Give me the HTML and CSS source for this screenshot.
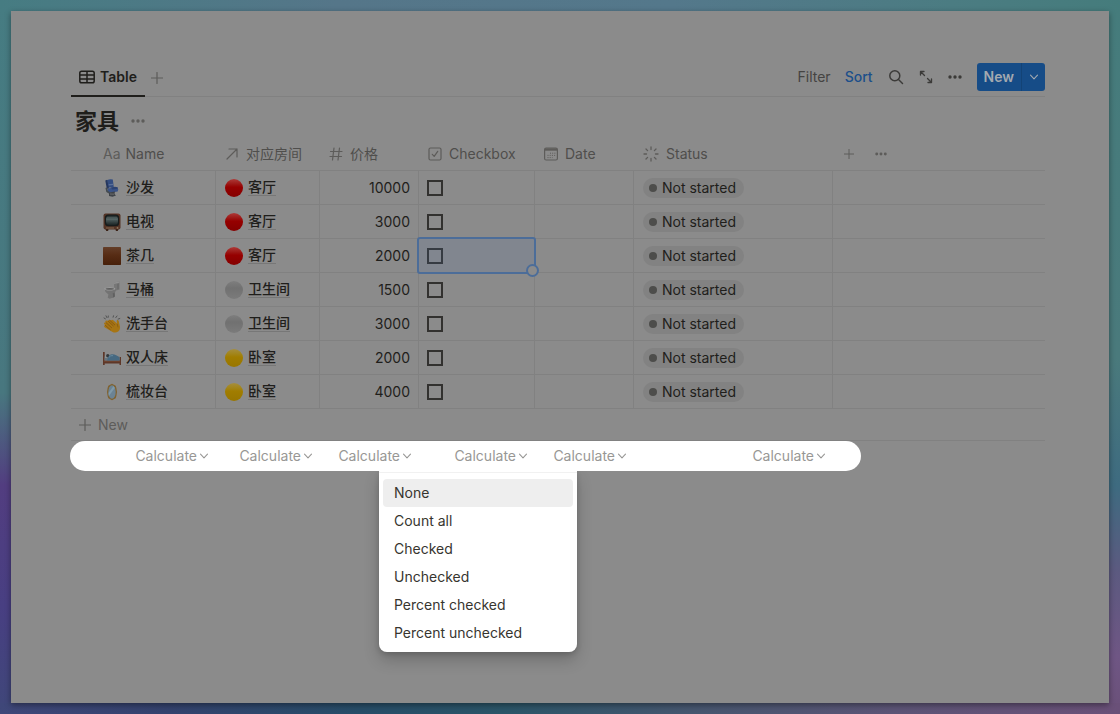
FILE: index.html
```html
<!DOCTYPE html>
<html lang="zh-CN">
<head>
<meta charset="utf-8">
<meta name="viewport" content="width=device-width, initial-scale=1">
<title>家具</title>
<link rel="stylesheet" href="styles.css">
</head>
<body>
<svg class="defs" aria-hidden="true">
  <defs>
    <linearGradient id="g-red" x1="0" y1="0" x2="0" y2="1"><stop offset="0" stop-color="#ae3a38"/><stop offset=".28" stop-color="#9c1715"/><stop offset=".45" stop-color="#960000"/><stop offset="1" stop-color="#840000"/></linearGradient>
    <linearGradient id="g-white" x1="0" y1="0" x2="0" y2="1"><stop offset="0" stop-color="#7e7e7e"/><stop offset=".4" stop-color="#717171"/><stop offset="1" stop-color="#7b7b7b"/></linearGradient>
    <linearGradient id="g-yellow" x1="0" y1="0" x2="0" y2="1"><stop offset="0" stop-color="#a58e3e"/><stop offset=".3" stop-color="#a28416"/><stop offset=".45" stop-color="#a17d00"/><stop offset="1" stop-color="#987600"/></linearGradient>
    <linearGradient id="g-brown" x1="0" y1="0" x2="0" y2="1"><stop offset="0" stop-color="#643e28"/><stop offset=".45" stop-color="#572c14"/><stop offset="1" stop-color="#47200a"/></linearGradient>
    <linearGradient id="g-tv" x1="0" y1="0" x2="0" y2="1"><stop offset="0" stop-color="#1c2424"/><stop offset=".35" stop-color="#526262"/><stop offset="1" stop-color="#1c2525"/></linearGradient>
    <symbol id="chevron" viewBox="0 0 10 10"><path d="M1.500 3.200 5 6.800l3.500-3.600" fill="none" stroke="currentColor" stroke-width="1.100" stroke-linecap="round" stroke-linejoin="round"/></symbol>
    <symbol id="plus" viewBox="0 0 12 12"><path d="M6 .5v11M.5 6h11" fill="none" stroke="currentColor" stroke-width="1.200" stroke-linecap="round"/></symbol>
    <symbol id="dots" viewBox="0 0 14 14"><g fill="currentColor"><circle cx="2" cy="7" r="1.700"/><circle cx="7" cy="7" r="1.700"/><circle cx="12" cy="7" r="1.700"/></g></symbol>
    <symbol id="red" viewBox="0 0 18 18"><circle cx="9" cy="9" r="9" fill="url(#g-red)"/></symbol>
    <symbol id="white" viewBox="0 0 18 18"><circle cx="9" cy="9" r="9" fill="url(#g-white)"/></symbol>
    <symbol id="yellow" viewBox="0 0 18 18"><circle cx="9" cy="9" r="9" fill="url(#g-yellow)"/></symbol>
    <symbol id="seat" viewBox="0 0 18 18">
      <path d="M4 1.200Q7-.2 9.800.6l1 8H5.200Z" fill="#344d80"/><path d="M2.300 1.500 4.200.700 6 9.500l-2.200.2Z" fill="#25375f"/>
      <path d="m5.500 5.200 4.500-.4.200 1.200-4.500.4Z" fill="#5c7199"/>
      <path d="M5 9.500 13.500 8l1.700 2.500-.5 2-8.200 1.300L4.500 12Z" fill="#3a5388"/><path d="m8 8.500 4-.8 3 .8-.2 1.200-5.600.8Z" fill="#2c4272"/>
      <path d="m4.200 8.200-1.700.8.800 4 3 1.700.2-2-1.700-1Z" fill="#444b52"/>
      <path d="m6 13.500 6-1-.5 2.500 1.500 1.500-3.500 1.200L6 17Z" fill="#3f4348"/><path d="m7 15 4 .2" stroke="#777" stroke-width=".8"/>
    </symbol>
    <symbol id="tv" viewBox="0 0 18 18">
      <rect x=".5" y=".5" width="17" height="16" rx="2" fill="#543426"/><path d="M2.500 16h3l-.4 2H3.200Zm10 0h3l-.7 2h-1.900Z" fill="#3c2318"/>
      <rect x="1.800" y="1.500" width="14.400" height="11.800" rx="3.500" fill="#171c1c"/><rect x="3" y="2.500" width="12" height="9.500" rx="3.500" fill="url(#g-tv)"/>
      <path d="M4 4.500h10M3.500 6.500h11" stroke="#6d7b7b" stroke-width=".5" opacity=".5"/>
      <path d="M3 15h8" stroke="#81674f" stroke-width="1"/><circle cx="14.500" cy="14.900" r=".9" fill="#91785e"/>
    </symbol>
    <symbol id="square" viewBox="0 0 18 18"><rect width="18" height="18" rx=".7" fill="url(#g-brown)"/></symbol>
    <symbol id="toilet" viewBox="0 0 18 18">
      <path d="M11 1.500 16.500.500v8.200l-4 .8L11 8Z" fill="#777"/><path d="m11 1.500 5.500-1v1.300L11 3Z" fill="#919191"/>
      <path d="m14 3 2-.4V8l-2 .4Z" fill="#6d6d6d"/><path d="M1.500 7.200Q6 5 12.500 7l1 1.800-1.800 3-2.200 1.700.2 3.200-3.200 1-1.800-1 .7-3.200-3-2.800Z" fill="#737373"/>
      <ellipse cx="6.700" cy="7.700" rx="5.700" ry="1.700" fill="#9a9a9a"/><ellipse cx="6.800" cy="7.900" rx="4.200" ry=".8" fill="#5d5d5d"/>
      <path d="m9.700 12.500 2-1 .3 4-2.300 1.500Z" fill="#606060"/>
    </symbol>
    <symbol id="clap" viewBox="0 0 18 18">
      <path d="M8.300 5.200q1-1 2 .1l3.700 3.300-.3-2.500q.1-1.200 1.300-1 .9.300 1.200 3.100l.8 3.600q.4 2.800-1.800 4.700-3 2.100-6 .2L1.600 12.200q-1-1.100-.1-1.800l.8-.1-1.100-1.200q-.7-1.400.8-1.700l1 .2-.5-.7q-.5-1.400 1.100-1.500l1.600.7q-.1-1.300 1.200-1.200Z" fill="#a77514"/>
      <path d="m5.200 6.100 5 4.700M3 7.600l5.700 5.200M2.300 10.300l5 4.400M6.700 5.300l5 4.500" fill="none" stroke="#7d4f10" stroke-width=".7" stroke-linecap="round"/>
      <path d="m14.200 8.800.8 3.500" stroke="#815615" stroke-width=".7"/>
      <path d="m1 3 1.400.8M3 .8l.8 1.700M5.300 1l-.2 1.400M10.500.8l-.4 1.400M14 1l-1.200 1.600M16.800 3.500l-1.700.6" stroke="#515252" stroke-width="1" stroke-linecap="round"/>
    </symbol>
    <symbol id="bed" viewBox="0 0 18 18">
      <path d="M0 3h1.700v13H0ZM16.500 8H18v8h-1.500ZM1 11.500h16v3H1Z" fill="#5e3728"/><path d="M1.500 7.500h15v4.200h-15Z" fill="#66747d"/>
      <path d="M2 6.500Q4.500 4.500 6 6.500L7 9H2Z" fill="#8d9294"/><circle cx="4.800" cy="6.800" r="1.700" fill="#34393d"/>
      <path d="M5 8.800q1-3.500 4-3.600 4.300-.2 7.500 3.500v3H4Z" fill="#466981"/><path d="M6 8.300q1.500-2.200 4-1.700" stroke="#66899e" fill="none"/>
      <path d="M1 12.200h16" stroke="#7d4e38" stroke-width=".7"/>
    </symbol>
    <symbol id="mirror" viewBox="0 0 18 18">
      <path d="m9 .700 1.400.800 2.300 1.300.7 2.200.6 4-.6 4-.7 2.200-2.300 1.300-1.400.8-1.400-.8-2.300-1.300-.7-2.200L4 9l.6-4 .7-2.200 2.300-1.300Z" fill="#80622f"/>
      <ellipse cx="9" cy="9" rx="3.700" ry="6.800" fill="#6b8394"/><path d="m5.500 10 5-7 1.300 2-6 8Z" fill="#7f99a8"/>
    </symbol>
  </defs>
</svg>

<main class="window">
  <header class="toolbar">
    <nav class="tabs" aria-label="Views">
      <button class="tab"><svg class="i16" viewBox="0 0 16 16" fill="none" stroke="currentColor" stroke-width="1.500"><rect x=".8" y="2.300" width="14.400" height="11.400" rx="1.800"/><path d="M1 6.100h14M1 9.900h14M8 2.500v11"/></svg>Table</button>
      <button class="icon-btn faint" aria-label="Add view"><svg class="i12"><use href="#plus"/></svg></button>
    </nav>
    <div class="actions">
      <button class="text-btn">Filter</button>
      <button class="text-btn sort">Sort</button>
      <button class="icon-btn" aria-label="Search"><svg class="i16" viewBox="0 0 16 16" fill="none" stroke="currentColor" stroke-width="1.500" stroke-linecap="round"><circle cx="6.800" cy="6.800" r="5"/><path d="m10.500 10.500 4 4"/></svg></button>
      <button class="icon-btn" aria-label="Expand"><svg class="i14" viewBox="0 0 14 14" fill="none" stroke="currentColor" stroke-width="1.300" stroke-linecap="round" stroke-linejoin="round"><path d="M1.500 5V1.500H5M1.500 1.500l4 4M9 12.500h3.500V9M12.500 12.500l-4-4"/></svg></button>
      <button class="icon-btn" aria-label="More"><svg class="i14"><use href="#dots"/></svg></button>
      <div class="split"><button class="new">New</button><button class="new-more" aria-label="Templates"><svg class="i10"><use href="#chevron"/></svg></button></div>
    </div>
  </header>

  <div class="title"><h1>家具</h1><button class="icon-btn faint" aria-label="Database options"><svg class="i14"><use href="#dots"/></svg></button></div>

  <table class="grid">
    <colgroup><col class="c-name"><col class="c-room"><col class="c-price"><col class="c-check"><col class="c-date"><col class="c-status"><col></colgroup>
    <thead>
      <tr>
        <th class="first"><span class="head"><span class="aa">Aa</span>Name</span></th>
        <th><span class="head"><svg class="i14" viewBox="0 0 14 14" fill="none" stroke="currentColor" stroke-width="1.200" stroke-linecap="round" stroke-linejoin="round"><path d="M2 12 12 2M4 2h8v8"/></svg>对应房间</span></th>
        <th><span class="head"><svg class="i14" viewBox="0 0 14 14" fill="none" stroke="currentColor" stroke-width="1.200" stroke-linecap="round"><path d="M5 1 3.500 13M10.500 1 9 13M1.500 4.500h11.500M1 9.500h11.500"/></svg>价格</span></th>
        <th><span class="head"><svg class="i14" viewBox="0 0 14 14" fill="none" stroke="currentColor" stroke-width="1.200" stroke-linecap="round" stroke-linejoin="round"><rect x="1" y="1" width="12" height="12" rx="1.500"/><path d="m4.300 7.300 1.900 2 3.500-5"/></svg>Checkbox</span></th>
        <th><span class="head"><svg class="i14" viewBox="0 0 14 14" fill="none" stroke="currentColor" stroke-width="1.200"><rect x=".6" y="1" width="12.800" height="12" rx="1.500"/><path d="M1 2.500h12" stroke-width="2.400"/><path d="M6 6.200h5.500M3.500 8.400h8M3.500 10.600h5" stroke-dasharray="1 1.200" stroke-width="1"/></svg>Date</span></th>
        <th><span class="head"><svg class="i16" viewBox="0 0 16 16" fill="none" stroke="currentColor" stroke-width="1.300" stroke-linecap="round"><path d="M8 1v2.500M8 12.500V15M1 8h2.500M12.500 8H15M3 3l1.600 1.600M11.400 11.400 13 13M3 13l1.600-1.600M11.400 4.600 13 3"/></svg>Status</span></th>
        <th><span class="head tail"><button class="icon-btn faint" aria-label="Add property"><svg class="i10"><use href="#plus"/></svg></button><button class="icon-btn faint" aria-label="Property options"><svg class="i12"><use href="#dots"/></svg></button></span></th>
      </tr>
    </thead>
    <tbody>
      <tr><td class="first"><span class="page"><svg class="i18"><use href="#seat"/></svg><a href="#">沙发</a></span></td><td><span class="page"><svg class="i18"><use href="#red"/></svg><a href="#">客厅</a></span></td><td class="num">10000</td><td class="check"><input type="checkbox" aria-label="沙发"></td><td></td><td><span class="status">Not started</span></td><td></td></tr>
      <tr><td class="first"><span class="page"><svg class="i18"><use href="#tv"/></svg><a href="#">电视</a></span></td><td><span class="page"><svg class="i18"><use href="#red"/></svg><a href="#">客厅</a></span></td><td class="num">3000</td><td class="check"><input type="checkbox" aria-label="电视"></td><td></td><td><span class="status">Not started</span></td><td></td></tr>
      <tr><td class="first"><span class="page"><svg class="i18"><use href="#square"/></svg><a href="#">茶几</a></span></td><td><span class="page"><svg class="i18"><use href="#red"/></svg><a href="#">客厅</a></span></td><td class="num">2000</td><td class="check selected"><input type="checkbox" aria-label="茶几"></td><td></td><td><span class="status">Not started</span></td><td></td></tr>
      <tr><td class="first"><span class="page"><svg class="i18"><use href="#toilet"/></svg><a href="#">马桶</a></span></td><td><span class="page"><svg class="i18"><use href="#white"/></svg><a href="#">卫生间</a></span></td><td class="num">1500</td><td class="check"><input type="checkbox" aria-label="马桶"></td><td></td><td><span class="status">Not started</span></td><td></td></tr>
      <tr><td class="first"><span class="page"><svg class="i18"><use href="#clap"/></svg><a href="#">洗手台</a></span></td><td><span class="page"><svg class="i18"><use href="#white"/></svg><a href="#">卫生间</a></span></td><td class="num">3000</td><td class="check"><input type="checkbox" aria-label="洗手台"></td><td></td><td><span class="status">Not started</span></td><td></td></tr>
      <tr><td class="first"><span class="page"><svg class="i18"><use href="#bed"/></svg><a href="#">双人床</a></span></td><td><span class="page"><svg class="i18"><use href="#yellow"/></svg><a href="#">卧室</a></span></td><td class="num">2000</td><td class="check"><input type="checkbox" aria-label="双人床"></td><td></td><td><span class="status">Not started</span></td><td></td></tr>
      <tr><td class="first"><span class="page"><svg class="i18"><use href="#mirror"/></svg><a href="#">梳妆台</a></span></td><td><span class="page"><svg class="i18"><use href="#yellow"/></svg><a href="#">卧室</a></span></td><td class="num">4000</td><td class="check"><input type="checkbox" aria-label="梳妆台"></td><td></td><td><span class="status">Not started</span></td><td></td></tr>
    </tbody>
  </table>

  <button class="add-row"><svg class="i12"><use href="#plus"/></svg>New</button>

  <div class="calc">
    <button>Calculate<svg class="i10"><use href="#chevron"/></svg></button>
    <button>Calculate<svg class="i10"><use href="#chevron"/></svg></button>
    <button>Calculate<svg class="i10"><use href="#chevron"/></svg></button>
    <div class="calc-cell">
      <button>Calculate<svg class="i10"><use href="#chevron"/></svg></button>
      <div class="menu" role="menu">
        <button class="active" role="menuitem">None</button>
        <button role="menuitem">Count all</button>
        <button role="menuitem">Checked</button>
        <button role="menuitem">Unchecked</button>
        <button role="menuitem">Percent checked</button>
        <button role="menuitem">Percent unchecked</button>
      </div>
    </div>
    <button>Calculate<svg class="i10"><use href="#chevron"/></svg></button>
    <button>Calculate<svg class="i10"><use href="#chevron"/></svg></button>
  </div>
</main>
</body>
</html>
```

FILE: styles.css
```css
:root {
  --panel: #8b8b8b;
  --line: #818181;
  --ink: #1f1e1b;
  --muted: #4f4e4c;
  --faint: #5d5c5a;
  --blue: #1c4f8a;
}
* { box-sizing: border-box; }
body {
  margin: 0;
  min-height: 100vh;
  padding: 11px;
  display: flex;
  font: 14px/20px Inter, "Noto Sans CJK SC", sans-serif;
  color: var(--ink);
  background:
    linear-gradient(90deg, #467c82 0%, #557689 30%, #54788b 60%, #4b7c82 85%, #457c7c 100%) top / 100% 11px no-repeat,
    linear-gradient(90deg, #3f4779 0%, #34426e 15%, #274d68 32%, #2b5568 45%, #46566f 62%, #5c5476 80%, #6a5078 100%) bottom / 100% 11px no-repeat,
    linear-gradient(180deg, #467c82 0%, #48777f 55%, #523d80 68%, #483f82 85%, #3f4779 100%) left / 11px 100% no-repeat,
    linear-gradient(180deg, #457c7c 0%, #4a7a7c 50%, #3e6b80 68%, #5c5a80 80%, #6f5684 92%, #6a5078 100%) right / 11px 100% no-repeat;
}
button { font: inherit; color: inherit; background: none; border: 0; padding: 0; cursor: pointer; }
svg { display: block; flex: none; }
.defs { position: absolute; width: 0; height: 0; }
.i10 { width: 10px; height: 10px; }
.i12 { width: 12px; height: 12px; }
.i14 { width: 14px; height: 14px; }
.i16 { width: 16px; height: 16px; }
.i18 { width: 18px; height: 18px; }

.window {
  flex: 1;
  min-width: 0;
  padding: 48px 64px 48px 60px;
  background: var(--panel);
  box-shadow: 0 2px 6px rgba(0, 0, 0, .4);
}
.toolbar { display: flex; justify-content: space-between; height: 38px; border-bottom: 1px solid var(--line); }
.tabs { display: flex; gap: 6px; align-items: center; }
.tab { display: flex; align-items: center; gap: 5px; height: 38px; padding: 0 8px; font-weight: 600; border-bottom: 2px solid var(--ink); }
.icon-btn { display: flex; color: #3b3a38; }
.faint { color: var(--faint); }
.actions { display: flex; align-items: center; gap: 15px; height: 36px; color: #454442; }
.text-btn + .text-btn { margin-left: -1px; }
.sort { color: var(--blue); font-weight: 500; }
.split { display: flex; height: 28px; border-radius: 3px; overflow: hidden; color: #a3a9b0; background: #164c87; }
.new { padding: 0 7px; font-weight: 600; }
.new-more { display: flex; align-items: center; justify-content: center; width: 24px; border-left: 1px solid #134376; }

.title { display: flex; align-items: center; gap: 12px; height: 47px; padding-left: 4px; }
.title h1 { margin: 0; font-size: 22px; line-height: 28px; font-weight: 700; }

.grid { width: 100%; table-layout: fixed; border-collapse: separate; border-spacing: 0; }
.c-name { width: 145px; }
.c-room { width: 104px; }
.c-price { width: 99px; }
.c-check { width: 116px; }
.c-date { width: 99px; }
.c-status { width: 199px; }
.grid th { height: 26px; padding: 0 9px 6px; text-align: left; font-weight: 400; color: var(--muted); border-bottom: 1px solid var(--line); }
.grid td { position: relative; height: 34px; padding: 0 9px; vertical-align: middle; border-bottom: 1px solid var(--line); border-right: 1px solid var(--line); }
.grid td:last-child { border-right: 0; }
.grid .first { padding-left: 32px; }
.head { display: flex; align-items: center; gap: 7px; white-space: nowrap; }
.head svg { color: var(--faint); }
.aa { color: var(--faint); }
.head .aa { margin-right: -2px; }
.tail { gap: 21px; padding-left: 2px; }
.page { display: flex; align-items: center; gap: 5px; }
.page a { color: inherit; text-decoration: none; font-weight: 500; line-height: 16px; border-bottom: 1px solid #777; }
.grid .num { text-align: right; padding-right: 8px; }
.grid .check { padding-left: 8px; }
.grid input { appearance: none; display: block; width: 16px; height: 16px; margin: 0; border: 2px solid #32312f; }
.status { display: inline-flex; align-items: center; gap: 5px; height: 20px; padding: 0 8px 0 6px; border-radius: 10px; background: #828282; vertical-align: middle; }
.status::before { content: ""; width: 8px; height: 8px; border-radius: 50%; background: #4d4d4b; }
.selected::before { content: ""; position: absolute; inset: -2px; border: 2px solid #4c6d99; border-radius: 3px; background: rgba(80, 115, 165, .16); pointer-events: none; }
.selected::after { content: ""; position: absolute; right: -5px; bottom: -5px; width: 9px; height: 9px; border: 2px solid #4c6d99; border-radius: 50%; background: var(--panel); }
.grid .selected { z-index: 1; }

.add-row { display: flex; align-items: center; gap: 7px; width: 100%; height: 32px; padding-left: 8px; color: var(--faint); border-bottom: 1px solid var(--line); }
.calc {
  display: grid;
  grid-template-columns: 146px 104px 99px 116px 99px 199px;
  width: 791px;
  max-width: 100%;
  height: 30px;
  margin-left: -1px;
  border-radius: 15px;
  background: #fff;
  color: #989795;
}
.calc > button, .calc-cell > button { display: flex; align-items: center; justify-content: flex-end; gap: 2px; width: 100%; height: 30px; padding-right: 7px; }
.calc-cell { position: relative; }
.menu {
  position: absolute;
  top: 30px;
  right: -42px;
  width: 198px;
  padding: 8px 4px 5px;
  border-radius: 0 0 8px 8px;
  color: #37352f;
  background: linear-gradient(#fff 0 1px, #f1f1f1 1px 2px, #fff 2px);
  box-shadow: 0 8px 16px rgba(0, 0, 0, .2), 0 2px 5px rgba(0, 0, 0, .15);
  clip-path: inset(0 -30px -30px -30px);
}
.menu button { display: block; width: 100%; height: 28px; padding: 0 11px; text-align: left; border-radius: 4px; }
.menu .active { background: #eee; }
```
